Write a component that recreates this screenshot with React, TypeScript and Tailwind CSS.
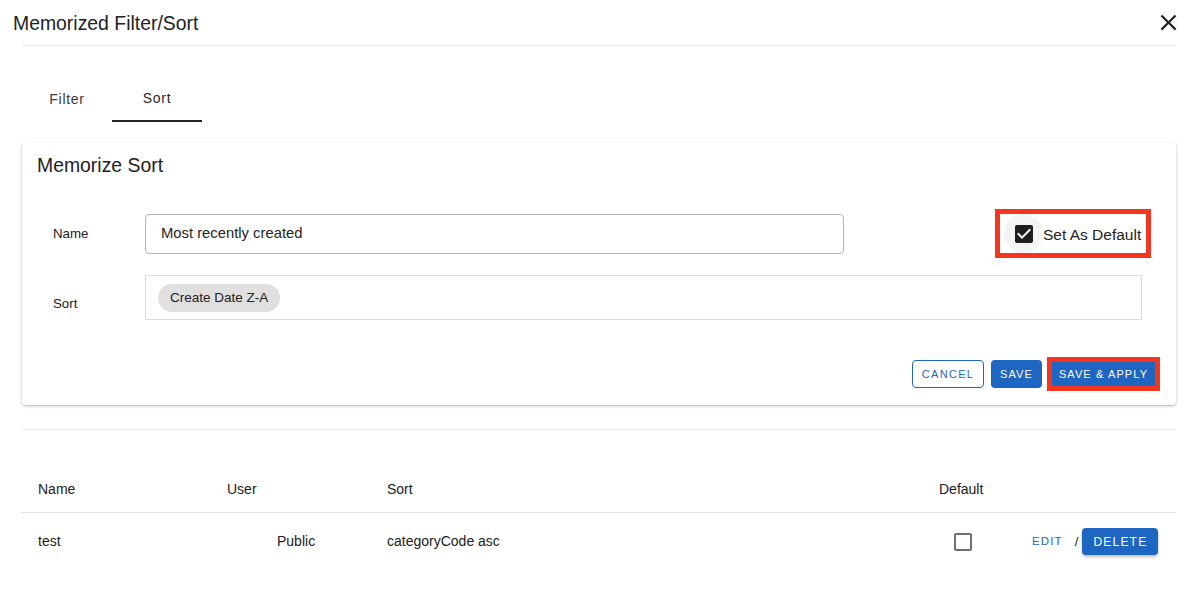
import React from "react";

function CheckedBox({ className }: { className?: string }) {
  return (
    <svg viewBox="0 0 24 24" className={className} fill="currentColor">
      <path d="M19 3H5c-1.11 0-2 .9-2 2v14c0 1.1.89 2 2 2h14c1.11 0 2-.9 2-2V5c0-1.1-.89-2-2-2zm-9 14l-5-5 1.41-1.41L10 14.17l7.59-7.59L19 8l-9 9z" />
    </svg>
  );
}

function EmptyBox({ className }: { className?: string }) {
  return (
    <svg viewBox="0 0 24 24" className={className} fill="currentColor">
      <path d="M19 5v14H5V5h14m0-2H5c-1.1 0-2 .9-2 2v14c0 1.1.9 2 2 2h14c1.1 0 2-.9 2-2V5c0-1.1-.9-2-2-2z" />
    </svg>
  );
}

export default function App() {
  return (
    <div className="w-[1198px] h-[593px] bg-white overflow-hidden font-['Liberation_Sans',Arial,sans-serif] text-[#212121]">
      {/* Header */}
      <div className="flex items-center justify-between h-[45px] pl-[13px] pr-[16px]">
        <div className="text-[19.4px] leading-[22px] text-[#222]">Memorized Filter/Sort</div>
        <svg viewBox="0 0 24 24" className="w-[27px] h-[27px] text-[#222]" fill="currentColor">
          <path d="M19 6.41 17.59 5 12 10.59 6.41 5 5 6.41 10.59 12 5 17.59 6.41 19 12 13.41 17.59 19 19 17.59 13.41 12z" />
        </svg>
      </div>
      <div className="mx-[22px] h-px bg-[#ebebeb]" />

      {/* Tabs */}
      <div className="mx-[22px] mt-[29px] flex h-[47px]">
        <div className="w-[90px] flex items-center justify-center pt-[1px] text-[14px] tracking-[0.05em] text-[#3a3a3a]">Filter</div>
        <div className="w-[90px] flex items-center justify-center pt-[1px] text-[14px] tracking-[0.05em] text-[#2a2a2a] border-b-2 border-[#222]">Sort</div>
      </div>

      {/* Card */}
      <div className="mx-[22px] mt-[20px] h-[263px] rounded-[4px] bg-white shadow-[0_1px_3px_rgba(0,0,0,0.25),0_1px_1px_rgba(0,0,0,0.08)] flex flex-col">
        <div className="pt-[12px] pl-[15px] text-[19.4px] leading-[22px] text-[#222]">Memorize Sort</div>

        <div className="mt-[33px] flex items-center pl-[31px] pr-[23px]">
          <div className="w-[92px] text-[13.3px]">Name</div>
          <div className="w-[699px] h-[40px] border border-[#b5b5b5] rounded-[4px] flex items-center pl-[15px] text-[14.8px] text-[#1e1e1e]">
            Most recently created
          </div>
          <div className="ml-auto mr-[2px] h-[49px] w-[156px] border-[5px] border-[#f2361f] flex items-center pl-[4px]">
            <div className="w-[39px] h-[39px] rounded-full bg-[#f4f4f4] flex items-center justify-center">
              <CheckedBox className="w-[24px] h-[24px] text-[#1e1e1e]" />
            </div>
            <div className="text-[15.5px] text-[#222] mt-[2px]">Set As Default</div>
          </div>
        </div>

        <div className="mt-[17px] flex pl-[31px]">
          <div className="w-[92px] pt-[21px] text-[13.3px] leading-[16px]">Sort</div>
          <div className="w-[997px] h-[45px] border border-[#dcdcdc] pl-[12px] pt-[8px]">
            <div className="inline-flex items-center h-[28px] px-[12px] rounded-full bg-[#e0e0e0] text-[13.5px] text-[#222]">
              Create Date Z-A
            </div>
          </div>
        </div>

        <div className="mt-[37px] flex items-center justify-end pr-[16px]">
          <button className="w-[72px] h-[28px] border border-[#1f66c2] rounded-[4px] text-[11px] tracking-[0.12em] text-[#1f66c2] bg-white">
            CANCEL
          </button>
          <button className="ml-[7px] w-[51px] h-[28px] rounded-[4px] text-[11px] tracking-[0.1em] text-white bg-[#1f66c2]">
            SAVE
          </button>
          <div className="ml-[5px] border-[5px] border-[#f2361f] bg-[#f2361f]">
            <button className="w-[103px] h-[24px] text-[11px] tracking-[0.1em] text-white bg-[#1f66c2] flex items-center justify-center">
              SAVE &amp; APPLY
            </button>
          </div>
        </div>
      </div>

      <div className="mx-[22px] mt-[24px] h-px bg-[#e9e9e9]" />

      {/* Table */}
      <div className="mx-[22px] mt-[26px]">
        <div className="flex h-[57px] border-b border-[#e0e0e0] text-[14px] leading-[16px] pt-[25px]">
          <div className="w-[189px] pl-[16px]">Name</div>
          <div className="w-[160px] pl-[16px]">User</div>
          <div className="w-[552px] pl-[16px]">Sort</div>
          <div className="w-[93px] pl-[16px]">Default</div>
          <div className="flex-1" />
        </div>
        <div className="flex items-center h-[56px] pt-[1px] text-[14px]">
          <div className="w-[189px] pl-[16px]">test</div>
          <div className="w-[160px] pl-[66px]">Public</div>
          <div className="w-[552px] pl-[16px]">categoryCode asc</div>
          <div className="w-[93px] pl-[28px] flex items-center">
            <EmptyBox className="w-[24px] h-[24px] text-[#707070]" />
          </div>
          <div className="flex-1 flex items-center pl-[16px]">
            <span className="text-[11.5px] tracking-[0.1em] text-[#1f66c2]">EDIT</span>
            <span className="ml-[12px] text-[13px]">/</span>
            <button className="ml-[4px] w-[76px] h-[27px] rounded-[4px] bg-[#1f66c2] text-white text-[12px] tracking-[0.1em] shadow-[0_2px_3px_rgba(0,0,0,0.25)]">
              DELETE
            </button>
          </div>
        </div>
      </div>
    </div>
  );
}
